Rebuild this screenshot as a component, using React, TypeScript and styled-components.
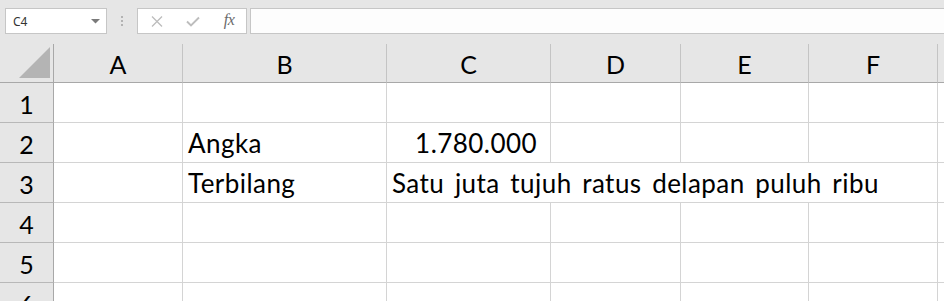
import React from 'react'
import styled, { createGlobalStyle } from 'styled-components'

// ─── Global ──────────────────────────────────────────────────────────────────

const GlobalStyle = createGlobalStyle`
    html, body {
        margin: 0;
        padding: 0;
        background: #ffffff;
        overflow: hidden;
    }
    * {
        box-sizing: border-box;
    }
`

// ─── Formula bar ─────────────────────────────────────────────────────────────

const Shell = styled.div`
    width: 944px;
    height: 301px;
    overflow: hidden;
    background: #ffffff;
    font-family: Lato, 'Open Sans', sans-serif;
`

const Toolbar = styled.div`
    display: flex;
    align-items: flex-start;
    height: 44px;
    padding: 8px 0 0 5px;
    background: #e6e6e6;
`

const NameBox = styled.div`
    display: flex;
    align-items: center;
    justify-content: space-between;
    width: 102px;
    height: 26px;
    padding: 0 6px 0 7px;
    border: 1px solid #c6c6c6;
    background: #ffffff;
    font-family: 'Noto Sans', 'Open Sans', sans-serif;
    font-size: 12px;
    color: #333333;
`

const Grip = styled.div`
    display: flex;
    flex-direction: column;
    gap: 2px;
    width: 30px;
    padding-top: 8px;
    align-items: center;

    span {
        width: 2px;
        height: 2px;
        background: #b3b3b3;
    }
`

const FxButtons = styled.div`
    display: flex;
    align-items: center;
    width: 110px;
    height: 26px;
    padding-left: 12px;
    border: 1px solid #c6c6c6;
    background: #ffffff;
`

const FxIcon = styled.span<{ $w: number }>`
    display: flex;
    align-items: center;
    justify-content: center;
    width: ${p => p.$w}px;
    height: 100%;
`

const FxText = styled.span`
    font-family: 'Liberation Serif', 'DejaVu Serif', serif;
    font-style: italic;
    font-size: 16px;
    color: #6b6b6b;
    letter-spacing: -0.5px;
    margin-top: -2px;
`

const FormulaInput = styled.div`
    flex: 1;
    height: 26px;
    margin-left: 3px;
    margin-right: -2px;
    border: 1px solid #c6c6c6;
    background: #fdfdfd;
`

// ─── Grid ────────────────────────────────────────────────────────────────────

const Sheet = styled.div`
    display: grid;
    grid-template-columns: 54px 129px 204px 164px 130px 128px 129px 1fr;
    grid-template-rows: 39px repeat(6, 40px);
`

const Corner = styled.div`
    display: flex;
    align-items: flex-end;
    justify-content: flex-end;
    padding: 0 3px 4px 0;
    background: #e6e6e6;
    border-right: 1px solid #a8a8a8;
    border-bottom: 1px solid #a8a8a8;
`

const ColHead = styled.div`
    display: flex;
    align-items: center;
    justify-content: center;
    background: #e6e6e6;
    border-right: 1px solid #c4c4c4;
    border-bottom: 1px solid #a8a8a8;
    font-size: 25px;
    color: #000000;
    padding-top: 2px;
`

const RowHead = styled.div`
    display: flex;
    align-items: center;
    justify-content: center;
    background: #e6e6e6;
    border-right: 1px solid #a8a8a8;
    border-bottom: 1px solid #b8b8b8;
    font-size: 25px;
    color: #000000;
    padding-top: 2px;
`

const Cell = styled.div<{ $align?: 'left' | 'right'; $span?: number }>`
    display: flex;
    align-items: center;
    justify-content: ${p => (p.$align === 'right' ? 'flex-end' : 'flex-start')};
    grid-column: span ${p => p.$span ?? 1};
    padding: 1px 13px 0 5px;
    border-right: 1px solid #d4d4d4;
    border-bottom: 1px solid #d4d4d4;
    font-size: 26px;
    letter-spacing: 0.45px;
    word-spacing: 3.5px;
    color: #000000;
    white-space: nowrap;
`

const columns = ['A', 'B', 'C', 'D', 'E', 'F', '']

type CellData = { text: string; align?: 'left' | 'right'; span?: number }

const data: Record<string, CellData> = {
    '2-1': { text: 'Angka' },
    '2-2': { text: '1.780.000', align: 'right' },
    '3-1': { text: 'Terbilang' },
    '3-2': { text: 'Satu juta tujuh ratus delapan puluh ribu', span: 4 },
}

function SheetRow({ row }: { row: number }) {
    const cells: React.ReactNode[] = []
    let ci = 0
    while (ci < columns.length) {
        const d = data[`${row}-${ci}`]
        if (d) {
            cells.push(
                <Cell key={ci} $align={d.align} $span={d.span}>
                    {d.text}
                </Cell>
            )
            ci += d.span ?? 1
        } else {
            cells.push(<Cell key={ci} />)
            ci += 1
        }
    }
    return (
        <>
            <RowHead>{row}</RowHead>
            {cells}
        </>
    )
}

export default function App() {
    const rows = [1, 2, 3, 4, 5, 6]
    return (
        <Shell>
            <GlobalStyle />
            <Toolbar>
                <NameBox>
                    C4
                    <svg width="9" height="5" viewBox="0 0 9 5">
                        <polygon points="0,0 9,0 4.5,4.5" fill="#7a7a7a" />
                    </svg>
                </NameBox>
                <Grip>
                    <span />
                    <span />
                    <span />
                </Grip>
                <FxButtons>
                    <FxIcon $w={14}>
                        <svg width="12" height="11" viewBox="0 0 12 11">
                            <path d="M1 0.5 L11 10.5 M11 0.5 L1 10.5" stroke="#bdbdbd" strokeWidth="1.3" />
                        </svg>
                    </FxIcon>
                    <FxIcon $w={58}>
                        <svg width="14" height="11" viewBox="0 0 14 11">
                            <path d="M1 5.5 L5 9.5 L13 1.5" stroke="#bdbdbd" strokeWidth="1.9" fill="none" />
                        </svg>
                    </FxIcon>
                    <FxIcon $w={14}>
                        <FxText>fx</FxText>
                    </FxIcon>
                </FxButtons>
                <FormulaInput />
            </Toolbar>
            <Sheet>
                <Corner>
                    <svg width="31" height="31" viewBox="0 0 31 31">
                        <polygon points="31,0 31,31 0,31" fill="#b4b4b4" />
                    </svg>
                </Corner>
                {columns.map((c, i) => (
                    <ColHead key={i}>{c}</ColHead>
                ))}
                {rows.map(r => (
                    <SheetRow key={r} row={r} />
                ))}
            </Sheet>
        </Shell>
    )
}
